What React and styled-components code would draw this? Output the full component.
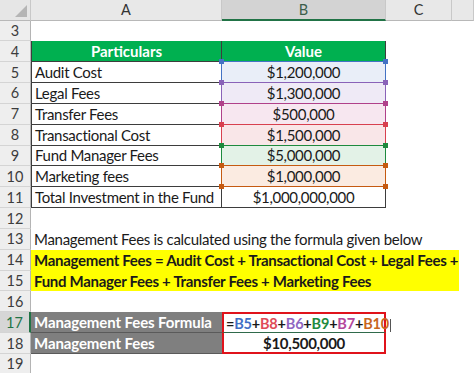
import React from 'react';
import styled, { createGlobalStyle } from 'styled-components';

const GlobalStyle = createGlobalStyle`
  html, body {
    margin: 0;
    padding: 0;
    background: #ffffff;
  }
  body {
    font-family: Lato, 'Open Sans', sans-serif;
    overflow: hidden;
  }
`;

const Sheet = styled.div`
  display: grid;
  grid-template-columns: 31px 191px 164px 66px 1fr;
  grid-template-rows: 20.5px;
  grid-auto-rows: 20.85px;
  width: 474px;
  height: 373px;
  overflow: hidden;
  font-size: 15px;
  letter-spacing: -0.3px;
  color: #1a1a1a;
`;

const Corner = styled.div`
  background: #e6e6e6;
  border-right: 1px solid #c8c8c8;
  border-bottom: 1px solid #b8b8b8;
  position: relative;
  box-sizing: border-box;

  &::after {
    content: '';
    position: absolute;
    right: 3px;
    bottom: 3px;
    width: 0;
    height: 0;
    border-left: 12px solid transparent;
    border-bottom: 12px solid #b5b5b5;
  }
`;

const ColHead = styled.div`
  display: flex;
  align-items: center;
  justify-content: center;
  box-sizing: border-box;
  background: ${p => (p.$active ? '#d3d3d3' : '#e8e8e8')};
  color: ${p => (p.$active ? '#3b5e4a' : '#333')};
  border-right: 1px solid #c8c8c8;
  border-bottom: ${p => (p.$active ? '2px solid #217346' : '1px solid #b8b8b8')};
  font-size: 14.5px;
  letter-spacing: 0;
`;

const RowHead = styled.div`
  display: flex;
  align-items: center;
  justify-content: center;
  box-sizing: border-box;
  background: ${p => (p.$active ? '#d6d6d6' : '#eeeeee')};
  color: ${p => (p.$active ? '#217346' : '#3c3c3c')};
  border-bottom: 1px solid #d4d4d4;
  border-right: ${p => (p.$active ? '2px solid #217346' : '1px solid #b4b4b4')};
  font-size: 14.5px;
  letter-spacing: 0;
`;

const Cell = styled.div`
  position: relative;
  display: flex;
  align-items: center;
  box-sizing: border-box;
  padding: 0 3px;
  white-space: nowrap;
  justify-content: ${p => (p.$center ? 'center' : 'flex-start')};
  font-weight: ${p => (p.$bold ? 700 : 400)};
  background: ${p => p.$bg || 'transparent'};
  color: ${p => p.$color || 'inherit'};
`;

const Span = styled(Cell)`
  grid-column: 2 / -1;
  padding: 0;
`;

const Band = styled.div`
  height: 100%;
  width: ${p => p.$width || 'auto'};
  display: flex;
  align-items: center;
  padding: 0 3px;
  box-sizing: border-box;
  background: ${p => p.$bg || 'transparent'};
  font-weight: ${p => (p.$bold ? 700 : 400)};
`;

const TableCell = styled(Cell)`
  border-bottom: 1px solid #3d3d3d;
  border-left: ${p => (p.$first ? '1px solid #3d3d3d' : 'none')};
  border-right: 1px solid #3d3d3d;
`;

const HeadCell = styled(TableCell)`
  background: #00b050;
  color: #ffffff;
  font-weight: 700;
  letter-spacing: 0;
  justify-content: center;
`;

const DarkCell = styled(Cell)`
  background: #7f7f7f;
  color: #ffffff;
  font-weight: 700;
  border-bottom: 1px solid #5a5a5a;
  letter-spacing: -0.1px;
`;

const RefFrame = styled.div`
  position: absolute;
  top: -1px;
  bottom: -1px;
  left: -1px;
  right: -1px;
  border: 1.5px solid ${p => p.$c};
  pointer-events: none;
  z-index: ${p => p.$z};
`;

const Handle = styled.span`
  position: absolute;
  width: 5px;
  height: 5px;
  background: ${p => p.$c};
  ${p => (p.$top ? 'top: -3px;' : 'bottom: -3px;')}
  ${p => (p.$left ? 'left: -3px;' : 'right: -3px;')}
`;

const ResultCell = styled(Cell)`
  border-left: 2px solid #e0131b;
  border-right: 2px solid #e0131b;
  ${p => (p.$top ? 'border-top: 2px solid #e0131b;' : 'border-bottom: 2px solid #e0131b;')}
  ${p => (p.$top ? 'border-bottom: 1.5px solid #2f6a4b;' : '')}
  padding: 0 2px;
`;

const Formula = styled.span`
  font-weight: 700;
  font-size: 14.5px;
  letter-spacing: -0.2px;
`;

const Ref = styled.span`
  color: ${p => p.$c};
`;

const Caret = styled.span`
  display: inline-block;
  width: 1px;
  height: 13px;
  margin-left: 1px;
  background: #555;
  vertical-align: middle;
`;

const Filler = styled.div`
  grid-column: 4 / -1;
`;

const refs = {
  B5: { line: '#4472c4', fill: '#e9eef8', text: '#3f6fc6' },
  B6: { line: '#8a62b8', fill: '#efeaf6', text: '#8f66c2' },
  B7: { line: '#b0418a', fill: '#f7e7f0', text: '#b4489b' },
  B8: { line: '#d8404f', fill: '#f9e6e8', text: '#e04a58' },
  B9: { line: '#1e8a3e', fill: '#e3f2e7', text: '#1f8a40' },
  B10: { line: '#c55a11', fill: '#fbebe1', text: '#c8661e' },
};

const tableRows = [
  { n: 5, a: 'Audit Cost', b: '$1,200,000', ref: 'B5' },
  { n: 6, a: 'Legal Fees', b: '$1,300,000', ref: 'B6' },
  { n: 7, a: 'Transfer Fees', b: '$500,000', ref: 'B7' },
  { n: 8, a: 'Transactional Cost', b: '$1,500,000', ref: 'B8' },
  { n: 9, a: 'Fund Manager Fees', b: '$5,000,000', ref: 'B9' },
  { n: 10, a: 'Marketing fees', b: '$1,000,000', ref: 'B10' },
  { n: 11, a: 'Total Investment in the Fund', b: '$1,000,000,000' },
];

const formulaParts = ['B5', 'B8', 'B6', 'B9', 'B7', 'B10'];

function RefCell({ id, children, z }) {
  const r = refs[id];
  return (
    <TableCell $center $bg={r.fill}>
      {children}
      <RefFrame $c={r.line} $z={z}>
        <Handle $c={r.line} $top $left />
        <Handle $c={r.line} $top />
        <Handle $c={r.line} $left />
        <Handle $c={r.line} />
      </RefFrame>
    </TableCell>
  );
}

function Empty({ n }) {
  return (
    <>
      <RowHead>{n}</RowHead>
      <Span />
    </>
  );
}

export default function App() {
  return (
    <>
      <GlobalStyle />
      <Sheet>
        <Corner />
        <ColHead>A</ColHead>
        <ColHead $active>B</ColHead>
        <ColHead>C</ColHead>
        <ColHead />

        <Empty n={3} />

        <RowHead>4</RowHead>
        <HeadCell $first>Particulars</HeadCell>
        <HeadCell>Value</HeadCell>
        <Filler />

        {tableRows.map((r, i) => (
          <React.Fragment key={r.n}>
            <RowHead>{r.n}</RowHead>
            <TableCell $first>{r.a}</TableCell>
            {r.ref ? (
              <RefCell id={r.ref} z={i + 1}>{r.b}</RefCell>
            ) : (
              <TableCell $center>{r.b}</TableCell>
            )}
            <Filler />
          </React.Fragment>
        ))}

        <Empty n={12} />

        <RowHead>13</RowHead>
        <Span>
          <Band>Management Fees is calculated using the formula given below</Band>
        </Span>

        <RowHead>14</RowHead>
        <Span>
          <Band $bg="#ffff00" $bold $width="428px">
            Management Fees = Audit Cost + Transactional Cost + Legal Fees +
          </Band>
        </Span>

        <RowHead>15</RowHead>
        <Span>
          <Band $bg="#ffff00" $bold $width="428px">
            Fund Manager Fees + Transfer Fees + Marketing Fees
          </Band>
        </Span>

        <Empty n={16} />

        <RowHead $active>17</RowHead>
        <DarkCell>Management Fees Formula</DarkCell>
        <ResultCell $top>
          <Formula>
            =
            {formulaParts.map((p, i) => (
              <React.Fragment key={p}>
                {i > 0 && '+'}
                <Ref $c={refs[p].text}>{p}</Ref>
              </React.Fragment>
            ))}
            <Caret />
          </Formula>
        </ResultCell>
        <Filler />

        <RowHead>18</RowHead>
        <DarkCell>Management Fees</DarkCell>
        <ResultCell $center $bold>$10,500,000</ResultCell>
        <Filler />

        <Empty n={19} />
      </Sheet>
    </>
  );
}
